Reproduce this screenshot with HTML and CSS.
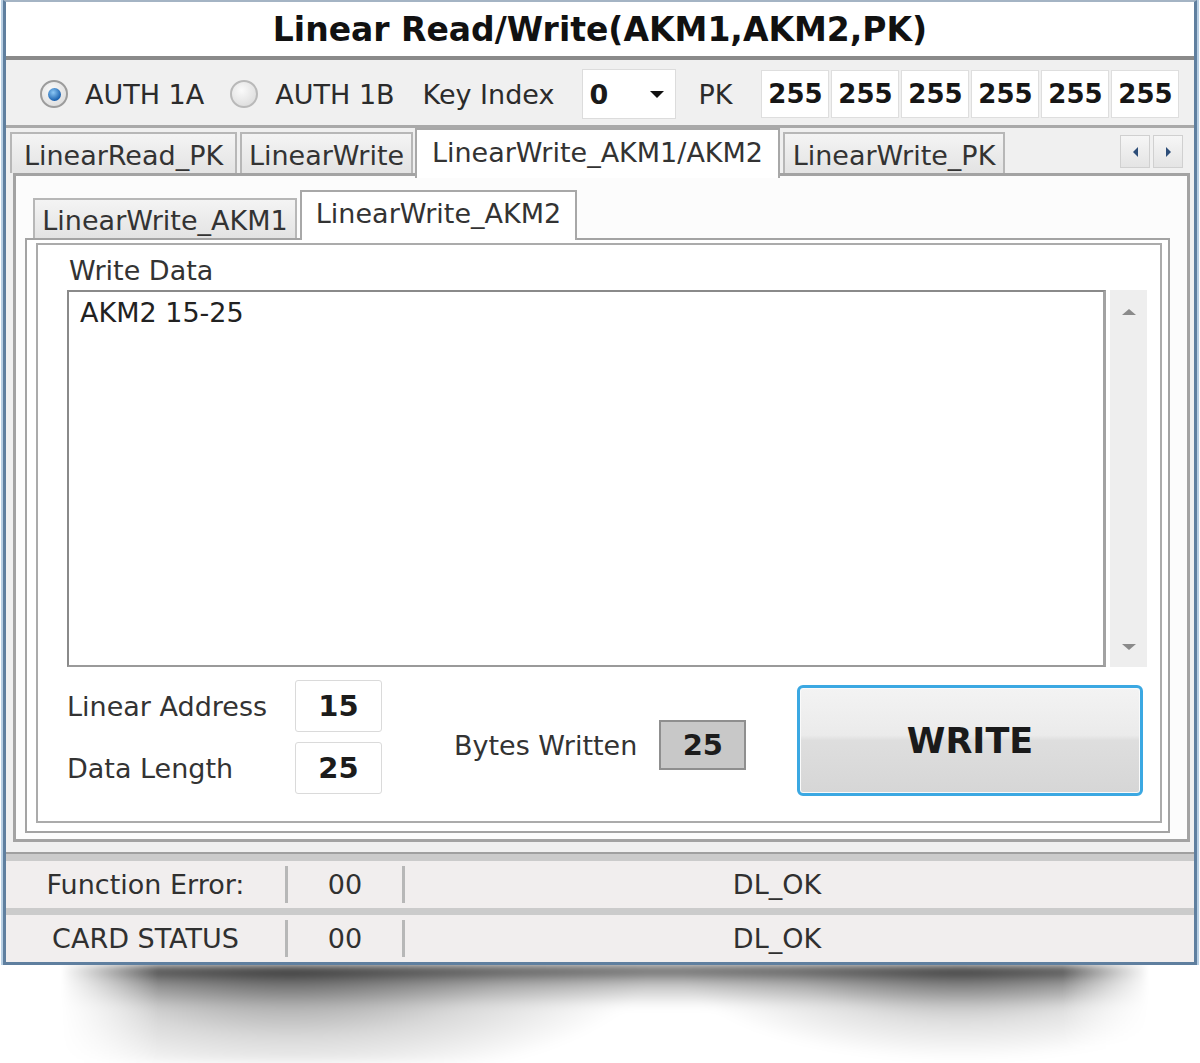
FILE: index.html
```html
<!DOCTYPE html>
<html>
<head>
    <title>Linear Read/Write</title>
    <link rel="stylesheet" href="styles.css">
</head>
<body>
    <div class="window">
        <div class="title">Linear Read/Write(AKM1,AKM2,PK)</div>

        <div class="toolbar">
            <span class="radio checked"></span><span class="label auth">AUTH 1A</span>
            <span class="radio second"></span><span class="label auth">AUTH 1B</span>
            <span class="label key">Key Index</span>
            <div class="combo"><span>0</span><span class="caret"></span></div>
            <span class="label pk">PK</span>
            <div class="keys">
                <span>255</span>
                <span>255</span>
                <span>255</span>
                <span>255</span>
                <span>255</span>
                <span>255</span>
            </div>
        </div>

        <div class="tabarea">
            <div class="tabs outer">
                <div class="tab w1">LinearRead_PK</div>
                <div class="tab w2">LinearWrite</div>
                <div class="tab w3 active">LinearWrite_AKM1/AKM2</div>
                <div class="tab w4">LinearWrite_PK</div>
                <div class="tabscroll">
                    <span class="btn"><span class="arrow left"></span></span>
                    <span class="btn"><span class="arrow right"></span></span>
                </div>
            </div>
            <div class="panel outer-panel">
                <div class="tabs inner">
                    <div class="tab w5">LinearWrite_AKM1</div>
                    <div class="tab w6 active">LinearWrite_AKM2</div>
                </div>
                <div class="panel inner-panel">
                    <div class="group">
                        <div class="group-label">Write Data</div>
                        <div class="editor">
                            <div class="textarea">AKM2 15-25</div>
                            <div class="vscroll"><span class="up"></span><span class="down"></span></div>
                        </div>
                        <div class="controls">
                            <div class="fields">
                                <span>Linear Address</span><span class="box">15</span>
                                <span>Data Length</span><span class="box">25</span>
                            </div>
                            <div class="written">
                                <span>Bytes Written</span><span class="box readonly">25</span>
                            </div>
                            <button class="write">WRITE</button>
                        </div>
                    </div>
                </div>
            </div>
        </div>

        <div class="status">
            <div class="row">
                <span class="name">Function Error:</span><span class="sep"></span>
                <span class="code">00</span><span class="sep"></span>
                <span class="msg">DL_OK</span>
            </div>
            <div class="row">
                <span class="name">CARD STATUS</span><span class="sep"></span>
                <span class="code">00</span><span class="sep"></span>
                <span class="msg">DL_OK</span>
            </div>
        </div>
    </div>
    <div class="shadow"></div>
</body>
</html>
```

FILE: styles.css
```css
* {
    box-sizing: border-box;
}
body {
    margin: 0;
    background: #fff;
    font-family: "DejaVu Sans", Verdana, sans-serif;
    font-size: 27px;
    color: #2b2b2b;
}
.window {
    margin: 0 3px;
    border: 3px solid #5f7f9f;
    border-top: 2px solid #a4b4c4;
    box-shadow: -2px 0 0 #b8cfe3, 2px 0 0 #b8cfe3;
    background: #f0f0f0;
}
.title {
    height: 58px;
    line-height: 56px;
    background: #fff;
    border-bottom: 4px solid #8a8a8a;
    text-align: center;
    font-weight: bold;
    font-size: 33px;
    color: #111;
    white-space: nowrap;
}

/* top row */
.toolbar {
    height: 68px;
    display: flex;
    align-items: center;
    padding: 3px 0 0 34px;
    border-bottom: 3px solid #a9a9a9;
    white-space: nowrap;
}
.radio {
    width: 28px;
    height: 28px;
    border-radius: 50%;
    border: 2px solid #b9b9b9;
    background: radial-gradient(circle at 40% 35%, #fafafa, #d6d6d6);
    display: flex;
    align-items: center;
    justify-content: center;
}
.radio.checked {
    border-color: #9c9c9c;
}
.radio.checked::after {
    content: "";
    width: 13px;
    height: 13px;
    border-radius: 50%;
    background: radial-gradient(circle at 40% 35%, #8cc8f5, #1b62b0 70%);
}
.radio.second {
    margin-left: 26px;
}
.label.auth {
    margin-left: 17px;
}
.label.key {
    margin-left: 28px;
}
.combo {
    margin-left: 28px;
    width: 94px;
    height: 50px;
    background: #fff;
    border: 1px solid #dcdcdc;
    display: flex;
    align-items: center;
    padding: 0 11px 0 6px;
    font-weight: bold;
    color: #1a1a1a;
}
.caret {
    margin-left: auto;
    border-top: 7px solid #111;
    border-left: 7px solid transparent;
    border-right: 7px solid transparent;
}
.label.pk {
    margin-left: 22px;
}
.keys {
    margin-left: 29px;
    display: flex;
    gap: 2px;
}
.keys span {
    width: 68px;
    height: 48px;
    background: #fff;
    border: 1px solid #dedede;
    display: flex;
    align-items: center;
    justify-content: center;
    font-weight: bold;
    font-size: 26px;
    color: #161616;
}

/* tabs */
.tabarea {
    padding: 0 4px 10px 4px;
}
.tabs {
    display: flex;
    align-items: flex-end;
}
.tab {
    border: 2px solid #b7b7b7;
    border-bottom: none;
    background: linear-gradient(#f4f4f4, #e3e3e3);
    display: flex;
    align-items: center;
    justify-content: center;
    white-space: nowrap;
    color: #333;
}
.tab.active {
    position: relative;
    z-index: 1;
    background: #fff;
    border-color: #a8a8a8;
}
.tabs.outer {
    height: 45px;
}
.tabs.outer .tab {
    height: 41px;
    padding-top: 3px;
    margin-right: 3px;
}
.tabs.outer .tab.active {
    height: 50px;
    margin-bottom: -5px;
    padding: 0 0 4px;
}
.w1 { width: 227px; }
.w2 { width: 173px; }
.w3 { width: 365px; margin-left: -1px; }
.w4 { width: 222px; }
.tabscroll {
    margin: 0 7px 5px auto;
    display: flex;
    gap: 3px;
}
.tabscroll .btn {
    width: 30px;
    height: 33px;
    border: 1px solid #d0d0d0;
    background: linear-gradient(#f6f6f6, #e4e4e4);
    display: flex;
    align-items: center;
    justify-content: center;
}
.arrow {
    border-top: 5px solid transparent;
    border-bottom: 5px solid transparent;
}
.arrow.left {
    border-right: 5px solid #2c4d78;
}
.arrow.right {
    border-left: 5px solid #2c4d78;
}

.panel {
    background: #fff;
}
.outer-panel {
    margin-left: 3px;
    border: 3px solid #a3a3a3;
    background: #fcfcfc;
    padding: 14px 17px 6px 9px;
}
.tabs.inner {
    height: 48px;
    margin-left: 8px;
}
.tabs.inner .tab {
    height: 40px;
    padding-top: 3px;
}
.tabs.inner .tab.active {
    height: 50px;
    margin-bottom: -2px;
    margin-left: 3px;
    padding: 0 0 6px;
}
.w5 { width: 264px; }
.w6 { width: 277px; }
.inner-panel {
    border: 2px solid #a3a3a3;
    padding: 3px 6px 8px 9px;
}

/* group box */
.group {
    border: 2px solid #ababab;
    padding: 0 13px 27px 29px;
}
.group-label {
    height: 45px;
    padding: 8px 0 0 2px;
    line-height: 35px;
    color: #333;
}
.editor {
    height: 377px;
    display: flex;
    gap: 4px;
}
.textarea {
    flex: 1;
    background: #fff;
    border: 2px solid #8a8a8a;
    border-right: 3px solid #a2a2a2;
    border-bottom-color: #9a9a9a;
    padding: 5px 11px;
    line-height: 32px;
    color: #222;
}
.vscroll {
    width: 37px;
    background: #eeeeee;
    display: flex;
    flex-direction: column;
    justify-content: space-between;
    align-items: center;
    padding: 19px 0 17px;
}
.vscroll .up {
    border-bottom: 6px solid #8a8a8a;
    border-left: 7px solid transparent;
    border-right: 7px solid transparent;
}
.vscroll .down {
    border-top: 6px solid #8a8a8a;
    border-left: 7px solid transparent;
    border-right: 7px solid transparent;
}
.controls {
    margin-top: 13px;
    height: 114px;
    display: flex;
    align-items: flex-start;
}
.fields {
    display: grid;
    grid-template-columns: 228px 87px;
    grid-auto-rows: 52px;
    row-gap: 10px;
    align-items: center;
    color: #333;
}
.box {
    height: 52px;
    display: flex;
    align-items: center;
    justify-content: center;
    background: #fff;
    border: 1px solid #dadada;
    border-radius: 3px;
    font-weight: bold;
    font-size: 29px;
    color: #1c1c1c;
}
.written {
    margin: 40px 0 0 72px;
    display: flex;
    align-items: center;
    gap: 22px;
    color: #333;
}
.box.readonly {
    width: 87px;
    height: 50px;
    background: #c8c8c8;
    border: 2px solid #8f8f8f;
    border-radius: 0;
}
.write {
    margin: 5px 4px 0 auto;
    width: 346px;
    height: 111px;
    border: 3px solid #3ba8e2;
    border-radius: 6px;
    background: linear-gradient(#f3f3f3, #ebebeb 45%, #dedede 50%, #d6d6d6);
    box-shadow: inset 0 0 0 1px #fafafa;
    font-family: "DejaVu Sans", Verdana, sans-serif;
    font-weight: bold;
    font-size: 35px;
    color: #1a1a1a;
    padding: 0;
}

/* status */
.status {
    border-top: 2px solid #a0a0a0;
    background: #f1eeee;
}
.row {
    height: 54px;
    border-top: 7px solid #cbcbcb;
    display: flex;
    align-items: center;
    color: #303030;
    white-space: nowrap;
}
.row .name {
    width: 279px;
    text-align: center;
}
.row .sep {
    width: 3px;
    height: 37px;
    background: #b7b7b7;
}
.row .code {
    width: 114px;
    text-align: center;
}
.row .msg {
    flex: 1;
    text-align: center;
    padding-right: 45px;
}

/* curled drop shadow under the window */
.shadow {
    height: 98px;
    margin: 0 50px 0 60px;
    background:
        linear-gradient(rgba(0, 0, 0, 0.7), rgba(0, 0, 0, 0.25) 18px, rgba(0, 0, 0, 0) 42px),
        radial-gradient(ellipse 360px 120px at 230px 0, rgba(0, 0, 0, 0.5), rgba(0, 0, 0, 0.15) 60%, rgba(0, 0, 0, 0)),
        radial-gradient(ellipse 280px 95px at 900px 0, rgba(0, 0, 0, 0.45), rgba(0, 0, 0, 0.12) 60%, rgba(0, 0, 0, 0));
    -webkit-mask-image: linear-gradient(to right, transparent, #000 9%, #000 92%, transparent);
    mask-image: linear-gradient(to right, transparent, #000 9%, #000 92%, transparent);
    filter: blur(5px);
}
```
